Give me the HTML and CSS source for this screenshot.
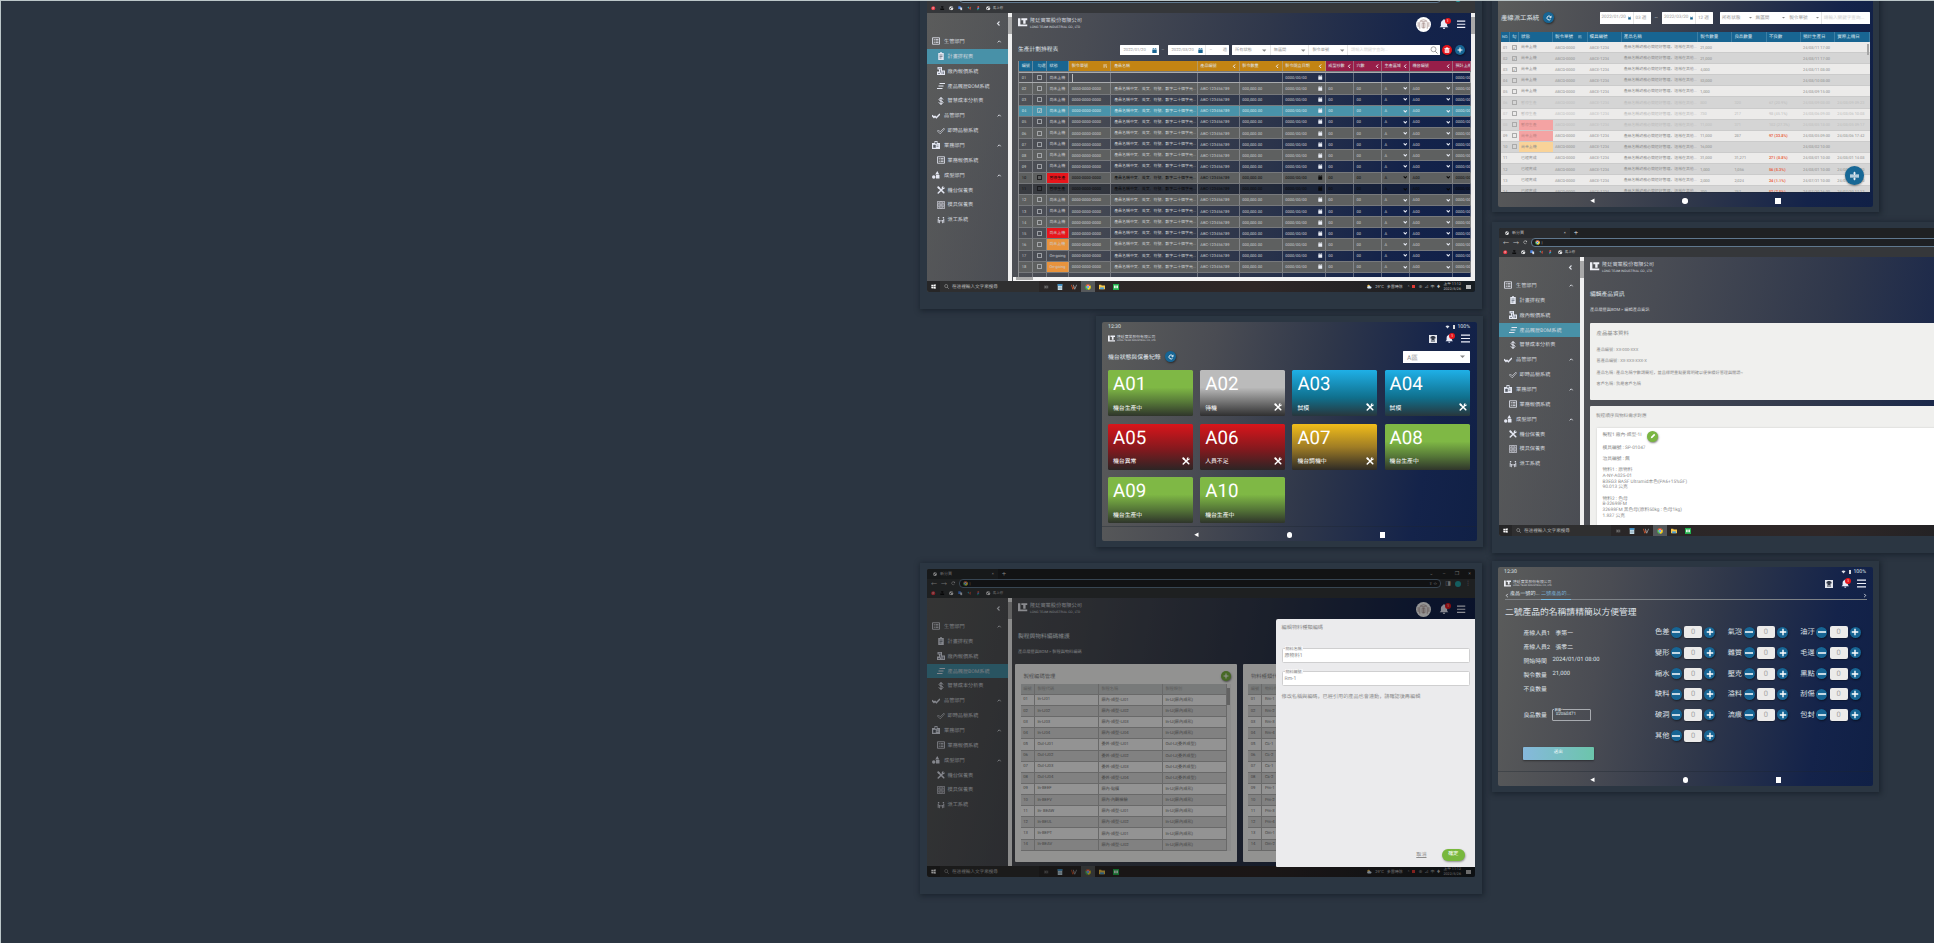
FILE: index.html
```html
<!DOCTYPE html>
<html lang="ja">
<head>
<meta charset="utf-8">
<title>隆廷實業系統介面</title>
<link rel="stylesheet" href="styles.css">
</head>
<body>
<svg class="sprite" aria-hidden="true">
  <symbol id="mark" viewBox="0 0 20 18"><path d="M0 0h5v13h15v4H0z" fill="currentColor"/><path d="M7 0h13v4h-4v7.500h-5V4H7z" fill="currentColor"/></symbol>
  <symbol id="list" viewBox="0 0 16 16"><path d="M1 1.500h14v13H1z" fill="none" stroke="currentColor" stroke-width="1.600"/><path d="M3.500 5h2M3.500 8h2M3.500 11h2M7 5h6M7 8h6M7 11h6" stroke="currentColor" stroke-width="1.500"/></symbol>
  <symbol id="clip" viewBox="0 0 16 16"><path d="M2.500 2H6a2 2 0 0 1 4 0h3.500v14h-11z" fill="currentColor"/><path d="M5 6h6M5 9h6M5 12h4" stroke="#4d5664" stroke-width="1.300"/></symbol>
  <symbol id="quote" viewBox="0 0 16 16"><path d="M1 0h9v7h6v9H0V9h4V5H1z" fill="currentColor"/><path d="M3 2.500h5M7 5v5M2 12l2 2 3-3M10 9v5M13 9v5" stroke="#4d5664" stroke-width="1.200" fill="none"/></symbol>
  <symbol id="bars" viewBox="0 0 16 16"><path d="M5 3h11M3 8h10M0 13h11" stroke="currentColor" stroke-width="2.400"/></symbol>
  <symbol id="dollar" viewBox="0 0 16 16"><path d="M12 5C11.500 3 10 2.500 8 2.500S4.200 3.400 4.200 5.200C4.200 9 12 6.800 12 10.700c0 1.800-1.700 2.800-4 2.800s-3.800-.9-4.200-2.900M8 0v16" fill="none" stroke="currentColor" stroke-width="2"/></symbol>
  <symbol id="checks" viewBox="0 0 24 16"><path d="M0 6l6 6 4-4M8 8l5 5L24 2" fill="none" stroke="currentColor" stroke-width="4.500"/></symbol>
  <symbol id="check" viewBox="0 0 20 16"><path d="M1 8l2.500-2.500L8 10 17 1l2 2L8 15z" fill="none" stroke="currentColor" stroke-width="1.500"/></symbol>
  <symbol id="case" viewBox="0 0 16 16"><path d="M0 4h5V0h6v4h5v12H0z" fill="currentColor"/><path d="M7 2h2v3H7zM3 8h4v5H3zM9 8h4M9 11h4" fill="#535861" stroke="#535861"/></symbol>
  <symbol id="mold" viewBox="0 0 16 16"><path d="M10.500 0l4 7h-8zM8 8h7v7H8z" fill="currentColor"/><circle cx="3.500" cy="12" r="3.500" fill="currentColor"/></symbol>
  <symbol id="tools" viewBox="0 0 16 16"><path d="M4.500 4.500l9 9" stroke="currentColor" stroke-width="3.200" stroke-linecap="round"/><path d="M12 4.500l-9.500 9.500" stroke="currentColor" stroke-width="3" stroke-linecap="round"/><path d="M1 1l2.500-.5L6 3.500 3.500 6 .5 3.500zM9.500 4.500C9 2 11 0 13.500.600L11.800 2.500l1.700 1.700 1.900-1.700C16 5 14 7 11.500 6.500z" fill="currentColor"/></symbol>
  <symbol id="grid" viewBox="0 0 16 16"><g fill="none" stroke="currentColor" stroke-width="1.300"><path d="M.8.8h14.400v14.400H.8zM.8 8h14.400M8 .8v14.400"/><circle cx="4.500" cy="4.500" r="1.300"/><circle cx="11.500" cy="4.500" r="1.300"/><circle cx="4.500" cy="11.500" r="1.300"/><circle cx="11.500" cy="11.500" r="1.300"/></g></symbol>
  <symbol id="crew" viewBox="0 0 20 16"><circle cx="4" cy="2.500" r="2" fill="currentColor"/><circle cx="16" cy="2.500" r="2" fill="currentColor"/><path d="M3 5v10M17 5v10M3 8l5 2h4l5-2M6 10v6M14 10v6" fill="none" stroke="currentColor" stroke-width="2"/></symbol>
  <symbol id="up" viewBox="0 0 10 10"><path d="M1.500 7L5 3.500 8.500 7" fill="none" stroke="currentColor" stroke-width="2.200"/></symbol>
  <symbol id="down" viewBox="0 0 10 10"><path d="M1.500 3L5 6.500 8.500 3" fill="none" stroke="currentColor" stroke-width="2.500"/></symbol>
  <symbol id="left" viewBox="0 0 10 10"><path d="M7 1L3 5l4 4" fill="none" stroke="currentColor" stroke-width="2.200"/></symbol>
  <symbol id="right" viewBox="0 0 10 10"><path d="M3 1l4 4-4 4" fill="none" stroke="currentColor" stroke-width="2.200"/></symbol>
  <symbol id="bell" viewBox="0 0 16 16"><path d="M1 13l2-2V7c0-3 2-4.500 3.500-5a1.500 1.500 0 0 1 3 0C11 2.500 13 4 13 7v4l2 2zM6 14h4a2 2 0 0 1-4 0z" fill="currentColor"/></symbol>
  <symbol id="burger" viewBox="0 0 16 16"><path d="M0 2h16M0 8h16M0 14h16" stroke="currentColor" stroke-width="2.200"/></symbol>
  <symbol id="cal" viewBox="0 0 16 16"><path d="M1 2h2V0h2v2h6V0h2v2h2v3H1zM1 6h14v10H1z" fill="currentColor"/></symbol>
  <symbol id="search" viewBox="0 0 16 16"><circle cx="7" cy="6.500" r="5" fill="none" stroke="currentColor" stroke-width="1.500"/><path d="M10.500 10.500L15 15" stroke="currentColor" stroke-width="2"/></symbol>
  <symbol id="caret" viewBox="0 0 10 10"><path d="M0 3h10L5 8z" fill="currentColor"/></symbol>
  <symbol id="plus" viewBox="0 0 16 16"><path d="M8 1.500v13M1.500 8h13" stroke="currentColor" stroke-width="2.800"/></symbol>
  <symbol id="minus" viewBox="0 0 16 16"><path d="M0 8h16" stroke="currentColor" stroke-width="3"/></symbol>
  <symbol id="trash" viewBox="0 0 16 16"><path d="M1 3h4V1h6v2h4v2H1zM2 6h12v9H2z" fill="currentColor"/><path d="M5 8v5M8 8v5M11 8v5" stroke="#e3131b"/></symbol>
  <symbol id="reload" viewBox="0 0 16 16"><path d="M12.500 10.500A5.300 5.300 0 1 1 12 4.500" fill="none" stroke="currentColor" stroke-width="2.400"/><path d="M14.500 1v6h-6z" fill="currentColor"/></symbol>
  <symbol id="pencil" viewBox="0 0 16 16"><path d="M2 14l1-4 8-8 3 3-8 8z" fill="currentColor"/></symbol>
  <symbol id="globe" viewBox="0 0 16 16"><circle cx="8" cy="8" r="7.500" fill="#eee"/><path d="M2 6l4 1 2 3-1 3-4-3zM9 2l5 4-3 2-3-3z" fill="#43474c"/></symbol>
  <symbol id="pin" viewBox="0 0 16 16"><circle cx="8" cy="8" r="7.500" fill="#e4313c"/><path d="M6.500 12l1.500-6M5.500 8a2.700 2.700 0 1 1 3.500 1.500" stroke="#fff" stroke-width="1.500" fill="none"/></symbol>
  <symbol id="tray" viewBox="0 0 16 16"><path d="M4 1h8v4h-3v3h-2V5H4zM1 9h14v5H1z" fill="#0c0d0e"/></symbol>
  <symbol id="trans" viewBox="0 0 16 16"><path d="M1 1h9v10H1z" fill="#4d86e8"/><path d="M7 5h8v10H9z" fill="#d5dbe4"/></symbol>
  <symbol id="duo" viewBox="0 0 16 16"><path d="M1 5l6-3v8z" fill="#2d9bb0"/><path d="M8 5l7-3-2 12-6-4z" fill="#a74a3a"/></symbol>
  <symbol id="fig" viewBox="0 0 16 16"><path d="M5 1h3v5H5z" fill="#f24e1e"/><path d="M8 1h3v5H8z" fill="#ff7262"/><path d="M5 6h3v5H5z" fill="#a259ff"/><path d="M8 6h3v5H8z" fill="#1abcfe"/><path d="M5 11h3v4H5z" fill="#0acf83"/></symbol>
  <symbol id="win" viewBox="0 0 16 16"><path d="M1 2.500L7 2v5.500H1zM8 2l7-1v6.500H8zM1 8.500h6V14l-6-.5zM8 8.500h7V15l-7-1z" fill="#fff"/></symbol>
  <symbol id="task" viewBox="0 0 16 16"><path d="M1 2v12M4 4h6v8H4zM13 2v12" stroke="#aaa" fill="none" stroke-width="1.600"/></symbol>
  <symbol id="calc" viewBox="0 0 16 16"><path d="M2 0h12v16H2z" fill="#cfe4ee"/><path d="M2 0h12v5H2z" fill="#3b8cc2"/><path d="M5 7v7M8 7v7M11 7v7" stroke="#4b6f82"/></symbol>
  <symbol id="wlogo" viewBox="0 0 16 16"><path d="M1 2l4 12 3-8" stroke="#e25a2c" stroke-width="2" fill="none"/><path d="M6 2l4 12 5-12" stroke="#9fa8ac" stroke-width="2" fill="none"/></symbol>
  <symbol id="chrome" viewBox="0 0 16 16"><circle cx="8" cy="8" r="7.500" fill="#4caf50"/><path d="M8 8L1.500 4.300A7.500 7.500 0 0 1 14.500 4.300z" fill="#ea4335"/><path d="M8 8l6.500-3.700A7.500 7.500 0 0 1 8 15.500z" fill="#fbc116"/><circle cx="8" cy="8" r="3.700" fill="#fff"/><circle cx="8" cy="8" r="2.700" fill="#4285f4"/></symbol>
  <symbol id="folder" viewBox="0 0 16 16"><path d="M0 2h6l1 2h9v10H0z" fill="#f5c64c"/><path d="M3 9h10v5H3z" fill="#4a9fd8"/></symbol>
  <symbol id="line" viewBox="0 0 16 16"><path d="M0 0h16v16H0z" fill="#23b14d"/><path d="M3 4h4v7H3zM9 4h4v7H9z" fill="#fff"/></symbol>
  <symbol id="cloud" viewBox="0 0 16 16"><circle cx="5" cy="6" r="4" fill="#f1c255"/><path d="M3 14a3 3 0 0 1 1-6 4 4 0 0 1 7 0 3 3 0 0 1 1 6z" fill="#d4e6f5"/></symbol>
  <symbol id="shirt" viewBox="0 0 16 16"><path d="M0 0h16v16H0z" fill="#e6e8ef"/><path d="M3 4l3-2h4l3 2v3h-2v7H9v-4H7v4H5V7H3z" fill="#333a49"/></symbol>
  <symbol id="face" viewBox="0 0 16 16"><circle cx="8" cy="8" r="8" fill="#fff"/><g fill="none" stroke="#a8918e" stroke-width=".8"><path d="M4 12.500V6q0-3 4-3t4 3v6.500M6.500 6.500h3v5h-3zM2.300 5.500v5M13.700 5.500v5"/><path d="M5.500 5h5M8 6v6"/></g></symbol>
  <symbol id="back" viewBox="0 0 10 10"><path d="M9 .5v9L.5 5z" fill="#fff"/></symbol>
  <symbol id="wifi" viewBox="0 0 16 16"><path d="M0 5q8-6 16 0l-8 9z" fill="currentColor"/></symbol>
  <symbol id="split" viewBox="0 0 16 16"><path d="M0 6.500h16M0 9.500h16M8 2v4M8 11v3" stroke="currentColor" stroke-width="1.900"/><path d="M5 3.500L8 0l3 3.500zM5 12.500L8 16l3-3.500z" fill="currentColor"/></symbol>
  <symbol id="sort" viewBox="0 0 16 16"><path d="M1 3h13M1 7h9M1 11h6M12 6v8" stroke="currentColor" stroke-width="2"/></symbol>
</svg>

<main class="canvas">
  <section class="frame frame-schedule"><div class="desktop" data-active="計畫排程表">
    <div class="page">
      <div class="main" data-slot="schedule"></div>
      <div class="vbar"><i></i></div>
    </div>
  </div></section>

  <section class="frame frame-dispatch"><div class="tablet" data-slot="dispatch"></div></section>

  <section class="frame frame-machines"><div class="tablet" data-slot="machines"></div></section>

  <section class="frame frame-product"><div class="desktop" data-active="產品履歷BOM系統">
    <div class="page">
      <div class="main product">
        <div class="brand"><svg class="mark"><use href="#mark"/></svg><span>隆廷實業股份有限公司<small>LONG TEAM INDUSTRIAL CO., LTD</small></span></div>
        <h2>編輯產品資訊</h2>
        <p class="crumb">產品履歷與BOM &gt; 編輯產品資訊</p>
        <div class="panel basics">
          <h3>產品基本資料</h3>
          <p>產品編號 : XX-000-XXX</p>
          <p>舊產品編號 : XX-XXX-XXX-X</p>
          <p>產品名稱 : 產品名稱字數請簡短，並且標題重點要寫明確以便後續好管理與閱讀~</p>
          <p>客戶名稱 : 我是客戶名稱</p>
        </div>
        <div class="panel process">
          <h3>製程順序與物料需求對應</h3>
          <div class="sheet">
            <h4>製程1 廠內-成型-1I <span class="round green"><svg><use href="#pencil"/></svg></span></h4>
            <p class="wide">模具編號 : SP-01047</p>
            <p class="wide">治具編號 : 無</p>
            <p>物料1 : 原物料<br>A-NY-A025-01<br>B3EG3 BASF Ultramid本色(PA6+15%GF)<br>90.013 公克</p>
            <p>物料2 : 色母<br>B-32698FM<br>32698FM 黑色母(原料50kg : 色母1kg)<br>1.837 公克</p>
          </div>
        </div>
      </div>
    </div>
  </div></section>

  <section class="frame frame-codes"><div class="desktop" data-active="產品履歷BOM系統">
    <div class="page">
      <div class="main codes">
        <div class="topline"><div class="brand"><svg class="mark"><use href="#mark"/></svg><span>隆廷實業股份有限公司<small>LONG TEAM INDUSTRIAL CO., LTD</small></span></div>
          <div class="tools"><svg class="avatar"><use href="#face"/></svg><span class="bell"><svg><use href="#bell"/></svg><em>1</em></span><svg class="burger"><use href="#burger"/></svg></div></div>
        <h2>製程與物料編碼維護</h2>
        <p class="crumb">產品履歷與BOM &gt; 製程與物料編碼</p>
        <div class="code-panels" data-slot="codes"></div>
      </div>
    </div>
    <div class="shade"></div>
    <aside class="drawer">
      <h3>編輯物料種類編碼</h3>
      <label class="field"><span>物料名稱</span>原物料1</label>
      <label class="field"><span>物料編號</span>Rm-1</label>
      <p>修改名稱與編碼，已經引用的產品也會連動，請確認後再編輯</p>
      <div class="actions"><span class="cancel">取消</span><span class="ok">確定</span></div>
    </aside>
  </div></section>

  <section class="frame frame-defects"><div class="tablet" data-slot="defects"></div></section>
</main>
<div class="edge"></div>
<script src="app.js"></script>
</body>
</html>
```
FILE: app.js
```js
const icon = (id, cls = '') => `<svg class="${cls}"><use href="#${id}"/></svg>`;
const range = n => Array.from({ length: n }, (_, i) => i);
const pad = n => String(n).padStart(2, '0');
const slot = name => document.querySelector(`[data-slot="${name}"]`);
const brand = `<div class="brand">${icon('mark', 'mark')}<span>隆廷實業股份有限公司<small>LONG TEAM INDUSTRIAL CO., LTD</small></span></div>`;
const bell = `<span class="bell">${icon('bell')}<em>1</em></span>${icon('burger', 'burger')}`;

const chrome = `<div class="chrome">
  <div class="tabs"><span class="tab">${icon('globe')}<span>新分頁</span><b>×</b></span><span class="add">+</span><span class="sys"><i>⌄</i><i>–</i><i>❐</i><i>×</i></span></div>
  <div class="nav"><span>←</span><span>→</span>${icon('reload')}<span class="url">${icon('chrome')}<span>|</span><span class="url-end">⇪ ☆</span></span><span class="side">◨</span><i class="me"></i><span>⋮</span></div>
  <div class="marks">${['pin', 'tray', 'globe', 'trans', 'duo', 'fig', 'globe'].map(i => icon(i)).join('')}<span>馬上修</span></div></div>`;

const taskbar = `<div class="taskbar"><span class="start">${icon('win')}</span><span class="find">${icon('search')}在這裡輸入文字來搜尋</span>
  ${['task', 'calc', 'wlogo', 'chrome', 'folder', 'line'].map(i => `<span class="app on-${i}">${icon(i)}</span>`).join('')}
  <span class="status">${icon('cloud')}<span>29°C</span><span>多雲時陰</span><span class="glyphs">^<i></i>⊕ ⊿ 中 ♦</span><span class="clock">上午 11:12<br>2022/5/26</span><span class="note"></span></span></div>`;

const menu = [
  ['list', '生管部門', 1], ['clip', '計畫排程表'], ['quote', '廠內報價系統'], ['bars', '產品履歷BOM系統'], ['dollar', '智慧成本分析表'],
  ['checks', '品管部門', 1], ['check', '即時品檢系統'], ['case', '業務部門', 1], ['list', '業務報價系統'],
  ['mold', '成型部門', 1], ['tools', '機台保養表'], ['grid', '模具保養表'], ['crew', '派工系統']];

document.querySelectorAll('.desktop').forEach(d => {
  const active = d.dataset.active;
  const rows = menu.map(([i, t, g]) => `<li class="${g ? 'group' : ''} ${t === active ? 'active' : ''}"><span class="ic">${icon(i)}</span>${t}${g ? icon('up', 'chev') : ''}</li>`).join('');
  d.querySelector('.page').insertAdjacentHTML('afterbegin', `<nav class="sidebar"><div class="fold">${icon('left')}</div><ul>${rows}</ul></nav><div class="vbar"><i></i></div>`);
  d.insertAdjacentHTML('afterbegin', chrome);
  d.querySelector('.page').insertAdjacentHTML('afterend', taskbar);
});

/* production schedule */
const heads = ['編號', '勾選', '狀態', '製令單號', '產品名稱', '產品編號', '製令數量', '製令開立日期', '成型秒數', '穴數', '生產區域', '機台編號', '預計上機'];
const name = '產品名稱中文、英文、符號、數字二十個字元...';
const cal = icon('cal'), dn = icon('down');
const statuses = { 10: '暫停生產', 11: '暫停生產', 17: 'On-going', 18: 'On-going' };
const scheduleRow = n => {
  const st = statuses[n] || '尚未上機';
  const rest = n === 1
    ? ['<i class="cursor"></i>', '', '', '', `0000/00/00${cal}`, '', '', '', '', '0000/00/00']
    : ['0000-0000-0000', name, 'ABC-123456789', '000,000.00', `0000/00/00${cal}`, '00', '00', `A${dn}`, `A00${dn}`, '0000/00/00'];
  return `<div class="tr r${n}">${[pad(n), `<i class="box">${n === 4 ? '✓' : ''}</i>`, st, ...rest].map(c => `<span>${c}</span>`).join('')}</div>`;
};
slot('schedule').innerHTML = `<div class="topline">${brand}<div class="tools">${icon('face', 'avatar')}${bell}</div></div>
<div class="filters"><h2>生產計劃排程表</h2>
  <span class="input d1">2022/01/20${cal}</span><span class="dash">–</span><span class="input d2"><span>2022/03/20${cal}</span><span>–</span><span>週</span></span>
  <span class="input sel"><span>所有狀態${icon('caret')}</span><span>無區間${icon('caret')}</span><span>製令單號${icon('caret')}</span><span class="q">請輸入關鍵字查詢...${icon('search')}</span></span>
  <span class="round red">${icon('trash')}</span><span class="round blue">${icon('plus')}</span></div>
<div class="grid-wrap"><div class="table schedule"><div class="tr th">${heads.map((h, i) => `<span>${h}${i === 3 ? icon('sort') : i > 4 && i < 12 ? icon('left') : ''}</span>`).join('')}</div>${range(18).map(i => scheduleRow(i + 1)).join('')}<div class="tr tail">${heads.map(() => '<span></span>').join('')}</div></div></div>
<div class="hbar"><i></i></div>`;

/* dispatch tablet */
const dHeads = ['NO.', '勾', '狀態', '製令單號', '模具編號', '產品名稱', '製令數量', '良品數量', '不良數', '預計生產日', '實際上機日'];
const dRows = [
  ['尚未上機', '21,000', '', '', '24/08/11 17:00', ''], ['尚未上機', '21,000', '', '', '24/08/11 17:00', ''],
  ['尚未上機', '4,000', '', '', '24/08/11 08:00', ''], ['尚未上機', '53,000', '', '', '24/08/10 08:00', ''],
  ['尚未上機', '1,000', '', '', '24/08/09 15:00', ''], ['暫停生產', '800', '320', '67 (20.9%)', '24/08/09 08:00', '24/08/09 09:23'],
  ['暫停生產', '730', '217', '98 (45.1%)', '24/08/06 09:00', '24/08/06 10:08'], ['暫停生產', '11,000', '371', '102 (27.3%)', '24/08/05 18:00', '24/08/05 09:17'],
  ['尚未上機', '11,000', '287', '97 (33.8%)', '24/08/05 09:00', '24/08/06 17:42'], ['尚未上機', '16,000', '', '', '24/08/02 10:00', ''],
  ['已經完成', '31,000', '31,271', '271 (0.8%)', '24/08/01 10:00', '24/08/01 14:08'], ['已經完成', '1,000', '1,056', '56 (5.3%)', '24/08/01 10:00', '24/08/01 10:40'],
  ['已經完成', '2,000', '2,024', '24 (1.1%)', '24/07/31 10:00', '24/07/31 11:20'], ['已經完成', '700', '757', '57 (7.5%)', '24/07/30 16:00', '24/07/30 17:12']];
const navbar = `<div class="navbar">${icon('back')}<i class="home"></i><i class="recent"></i></div>`;
slot('dispatch').innerHTML = `<small class="peek">LONG TEAM INDUSTRIAL CO., LTD</small>
<div class="d-filters"><h2>產線派工系統</h2><span class="round blue">${icon('reload')}</span>
  <span class="input dd"><span>2022/01/20${cal}</span><span>03 週</span></span><span class="dash">~</span><span class="input dd"><span>2022/03/20${cal}</span><span>12 週</span></span>
  <span class="input ds"><span>所有狀態${icon('caret')}</span><span>無區間${icon('caret')}</span><span>製令單號${icon('caret')}</span><span class="q">請輸入關鍵字查詢...</span></span></div>
<div class="d-wrap"><div class="table dispatch"><div class="tr th">${dHeads.map((h, i) => `<span>${h}${i === 3 ? icon('sort') : ''}</span>`).join('')}</div>
${dRows.map(([s, q, g, b, p, a], i) => `<div class="tr r${i + 1}">${[pad(i + 1), i < 10 ? `<i class="box">${i < 3 ? '✓' : ''}</i>` : '', s, 'ABCD-0000', 'ABCE-1234', '產品名稱請務必簡短好管理，這樣在其他...', q, g, b, p, a].map(c => `<span>${c}</span>`).join('')}</div>`).join('')}</div>
<span class="thumb"></span><span class="fab">${icon('split')}</span></div>${navbar}`;

/* machine status tablet */
const status = `<div class="statusbar"><span>12:30</span><span>${icon('wifi')}<i class="bat"></i>100%</span></div>
<div class="t-top">${brand}<div class="tools">${icon('shirt', 'shirt')}${bell}</div></div>`;
const machines = [['green', '機台生產中'], ['gray', '待機', 1], ['cyan', '試模', 1], ['cyan', '試模', 1], ['crimson', '機台異常', 1], ['crimson', '人員不足', 1], ['amber', '機台調機中', 1], ['green', '機台生產中'], ['green', '機台生產中'], ['green', '機台生產中']];
slot('machines').innerHTML = `${status}<div class="m-head"><h2>機台狀態與保養紀錄</h2><span class="round blue">${icon('reload')}</span><span class="input area">A區${icon('caret')}</span></div>
<div class="cards">${machines.map(([c, t, k], i) => `<div class="card ${c}"><b>A${pad(i + 1)}</b><span>${t}${k ? icon('tools') : ''}</span></div>`).join('')}</div>${navbar}`;

/* code tables */
const codes = [['In-IJ01', '廠內-成型-IJ01'], ['In-IJ02', '廠內-成型-IJ02'], ['In-IJ03', '廠內-成型-IJ03'], ['In-IJ04', '廠內-成型-IJ04'], ['Out-IJ01', '委外-成型-IJ01'], ['Out-IJ02', '委外-成型-IJ02'], ['Out-IJ03', '委外-成型-IJ03'], ['Out-IJ04', '委外-成型-IJ04'], ['In-BEEF', '廠內-貼膜'], ['In-BEFV', '廠內-內觀檢驗'], ['In- BEAW', '廠內-成型-IJ01'], ['In-BEUL', '廠內-成型-IJ02'], ['In-BEPT', '廠內-成型-IJ01'], ['In-BEAV', '廠內-成型-IJ02']];
const mats = ['Rm-1', 'Rm-2', 'Rm-3', 'Rm-4', 'Cc-1', 'Cc-2', 'Cs-1', 'Cs-2', 'Pm-1', 'Pm-2', 'Pm-3', 'Pm-4', 'Om-1', 'Om-2'];
const codeTable = (head, rows) => `<div class="code-body"><div class="table code"><div class="tr th">${head.map(h => `<span>${h}</span>`).join('')}</div>${rows.map(r => `<div class="tr">${r.map(c => `<span>${c}</span>`).join('')}</div>`).join('')}</div><div class="vbar"><i></i></div></div>`;
slot('codes').innerHTML = `<div class="panel"><h3>製程編碼管理<span class="round green">${icon('plus')}</span></h3>${codeTable(['編號', '製程代碼', '製程名稱', '製程類別'], codes.map(([c, n], i) => [pad(i + 1), c, n, c.startsWith('Out') ? 'Out-IJ(委外成型)' : 'In-IJ(廠內成形)']))}</div>
<div class="panel"><h3>物料種類代碼</h3>${codeTable(['編號', '物料代碼', '', ''], mats.map((m, i) => [pad(i + 1), m, '', '']))}</div>`;

/* defect entry tablet */
const info = [['產線人員1', '李第一'], ['產線人員2', '張零二'], ['開始時間', '2024/01/01 08:00'], ['製令數量', '21,000'], ['不良數量', '']];
const defects = ['色差', '氣泡', '油汙', '變形', '雜質', '毛邊', '縮水', '壓克', '黑點', '缺料', '溢料', '刮傷', '破洞', '流痕', '包封', '其他'];
slot('defects').innerHTML = `${status}<div class="t-tabs">${icon('left')}<span>產品一號的...</span><span class="on">二號產品的...</span>${icon('right', 'end')}</div>
<h1>二號產品的名稱請精簡以方便管理</h1>
<div class="entry"><div class="info"><dl>${info.map(([k, v]) => `<div><dt>${k}</dt><dd>${v}</dd></div>`).join('')}</dl>
<div class="good">良品數量<span class="num"><small>數量*</small>82868471</span></div><div class="send">送出</div></div>
<div class="counters">${defects.map(d => `<div class="counter"><span>${d}</span><i class="round blue">${icon('minus')}</i><b>0</b><i class="round blue">${icon('plus')}</i></div>`).join('')}</div></div>${navbar}`;
```
FILE: styles.css
```css
* { box-sizing: border-box; }
body { margin: 0; width: 1934px; height: 943px; overflow: hidden; background: #2b3541; font-family: Roboto, "Noto Sans CJK JP", sans-serif; color: #dfe2e8; text-rendering: geometricPrecision; }
h1, h2, h3, h4, p, ul, dl, dd { margin: 0; padding: 0; font-weight: 400; list-style: none; }
i, em { font-style: normal; }
svg { display: block; flex: none; width: 5px; height: 5px; overflow: visible; }
.sprite { position: absolute; width: 0; height: 0; }
.edge { position: absolute; inset: 0; border-top: 1px solid #bcc7c9; border-left: 1px solid #bcc7c9; pointer-events: none; }

/* screens placed on the canvas */
.canvas { position: relative; width: 1934px; height: 943px; overflow: hidden; }
.frame { position: absolute; background: #2b3642; box-shadow: 1px 1px 5px 1px rgba(12, 20, 28, .5); }
.frame-schedule { left: 920px; top: -22px; width: 562px; height: 331px; padding: 6px 7px; }
.frame-dispatch { left: 1492px; top: -18px; width: 387px; height: 230px; padding: 6px; }
.frame-machines { left: 1096px; top: 316px; width: 387px; height: 231px; padding: 6px; }
.frame-product { left: 1492px; top: 222px; width: 562px; height: 331px; padding: 6px 7px; }
.frame-codes { left: 920px; top: 563px; width: 562px; height: 331px; padding: 6px 7px; }
.frame-defects { left: 1492px; top: 561px; width: 387px; height: 231px; padding: 6px; }
.desktop { position: relative; width: 548px; height: 308px; display: flex; flex-direction: column; border-radius: 2px; overflow: hidden; background: linear-gradient(100deg, #5b5b5a 0%, #494c54 28%, #2f374b 58%, #14234a 84%, #102049 100%); }
.tablet { width: 375px; height: 219px; display: flex; flex-direction: column; border-radius: 2px; overflow: hidden; background: linear-gradient(100deg, #5b5c5b 0%, #4a4c53 28%, #2f374a 56%, #14234a 84%, #102046 100%); }

/* browser chrome */
.chrome { flex: none; height: 29px; background: #35373a; font-size: 4px; color: #bbb; }
.tabs { height: 9.500px; background: #1f2123; display: flex; align-items: center; }
.tab { width: 71px; height: 100%; background: #292b2e; display: flex; align-items: center; gap: 3px; padding: 0 4px 0 6px; }
.tab svg { width: 4px; height: 4px; }
.tab b { margin-left: auto; font-weight: 400; }
.add { margin-left: 4px; font-size: 7px; }
.sys { margin-left: auto; display: flex; gap: 9px; padding-right: 4px; font-size: 5px; }
.nav { height: 10px; display: flex; align-items: center; padding: 0 4px; gap: 4px; font-size: 6px; }
.nav > svg { width: 4.500px; height: 4.500px; }
.url { flex: 1; height: 8.500px; display: flex; align-items: center; gap: 2px; padding: 0 3px; margin-left: -1px; border: 1px solid #60788e; border-radius: 4px; background: #1e2023; font-size: 4px; }
.url-end { margin-left: auto; }
.me { width: 6px; height: 6px; border-radius: 50%; background: #23a0a4; }
.marks { height: 9px; display: flex; align-items: center; gap: 4.600px; padding-left: 4px; }
.marks svg { width: 4.500px; height: 4.500px; }
.marks span { margin-left: -2px; font-size: 3.500px; }
.frame-schedule .tabs, .frame-schedule .nav span:not(.url) { visibility: hidden; }

/* task bar */
.taskbar { flex: none; height: 11px; display: flex; align-items: center; background: linear-gradient(90deg, #262627, #2f2727 60%, #171d22); font-size: 4.600px; color: #b9b9b9; }
.start { width: 13px; display: grid; place-items: center; }
.find { width: 99px; height: 100%; background: #2f2f30; display: flex; align-items: center; gap: 3px; padding-left: 4px; }
.app { width: 14px; height: 100%; display: grid; place-items: center; }
.app svg { width: 6px; height: 6px; }
.on-chrome { background: #55585b; }
.on-task svg { width: 5px; height: 4px; }
.status { margin-left: auto; display: flex; align-items: center; gap: 3px; padding-right: 4px; font-size: 4px; }
.glyphs { display: flex; gap: 3px; align-items: center; white-space: pre; word-spacing: 1px; padding-left: 2px; }
.glyphs i { width: 3px; height: 3px; background: #e03a34; }
.clock { font-size: 3.700px; line-height: 5px; text-align: right; }
.note { width: 5px; height: 4px; background: #bbb; margin-left: 2px; }

/* sidebar */
.page { flex: none; height: 268px; display: flex; overflow: hidden; }
.sidebar { width: 80.500px; flex: none; background: linear-gradient(105deg, rgba(91, 92, 92, .7), rgba(72, 75, 82, .5)); font-size: 5.150px; }
.fold { height: 21px; display: flex; align-items: center; padding-left: 69px; }
.sidebar li { height: 14.860px; display: flex; align-items: center; padding-left: 8px; position: relative; color: #d5d8df; }
.sidebar li.group { padding-left: 3px; }
.ic { width: 12px; display: grid; place-items: center; margin-right: .5px; }
.group .ic { width: 12px; margin-right: 2px; }
.ic svg { width: 8px; height: 8px; color: #e4e7f2; }
.group .chev { margin-left: auto; margin-right: 6px; width: 4.500px; }
.sidebar li.active { background: #4891a8; }
.vbar { width: 4.500px; flex: none; background: #f0f0f0; padding: 4px .3px 0; }
.vbar i { display: block; height: 17px; background: #a9a9a9; }
.main { flex: 1; min-width: 0; display: flex; flex-direction: column; padding-left: 6px; overflow: hidden; }

/* shared pieces */
.topline { display: flex; justify-content: space-between; padding-right: 5.500px; height: 22px; flex: none; }
.brand { display: flex; gap: 2.500px; padding-top: 4.500px; }
.mark { width: 9.500px; height: 9px; color: #eef0f6; }
.brand span { font-size: 5.200px; line-height: 7px; color: #d0d3da; }
.brand small { display: block; font-size: 3.300px; line-height: 5px; white-space: nowrap; }
.tools { display: flex; align-items: center; gap: 8px; }
.avatar { width: 15px; height: 15px; }
.bell { position: relative; display: block; }
.bell svg { width: 10px; height: 10px; color: #e8ebf8; }
.bell em { position: absolute; right: -2px; top: -1px; width: 6px; height: 6px; border-radius: 50%; background: #e8171c; color: #fff; font-size: 4px; line-height: 6px; text-align: center; }
.burger { width: 8.500px; height: 8.500px; color: #eef0fa; }
.round { width: 10px; height: 10px; flex: none; border-radius: 50%; display: grid; place-items: center; color: #fff; box-shadow: .5px 1px 2px rgba(0, 0, 0, .5); }
.round svg { width: 6px; height: 6px; }
.blue { background: #176594; } .red { background: #e3131b; } .green { background: #7ab642; }
.input { background: #fff; color: #999; height: 10px; display: flex; align-items: center; font-size: 4.200px; white-space: nowrap; border-radius: .5px; }
.input svg { color: #1a6693; margin-left: auto; }
.dash { text-align: center; font-size: 5px; color: #9da1a8; }
.table .tr { display: grid; }
.table .tr > span { display: flex; align-items: center; min-width: 0; overflow: hidden; white-space: nowrap; padding-left: 2.700px; }
.box { width: 5px; height: 5px; border: 1px solid rgba(200, 203, 208, .65); font-size: 4px; line-height: 3px; text-align: center; border-radius: .5px; }

/* production schedule */
.filters { height: 26px; display: flex; align-items: center; padding-top: 4px; flex: none; }
.filters h2 { width: 101.500px; font-size: 5.750px; }
.d1 { width: 39px; padding: 0 2px 0 4px; }
.filters .dash { width: 9px; }
.d2 { width: 61.500px; margin-right: 3px; }
.d2 span { padding: 0 2px 0 4px; height: 100%; display: flex; align-items: center; }
.d2 span:first-child { width: 38px; border-right: 1px solid #e5e5e5; }
.d2 span:nth-child(2) { flex: 1; }
.sel { width: 207.500px; }
.sel > span { width: 38.700px; height: 100%; display: flex; align-items: center; padding: 0 3px; border-right: 1px solid #e5e5e5; }
.sel svg { color: #888; width: 4.500px; }
.sel .q { flex: 1; border: 0; color: #d5d5d5; padding-right: 1.500px; }
.sel .q svg { width: 8px; height: 8px; }
.filters .round { margin-left: 2.700px; }
.grid-wrap { height: 215.500px; flex: none; overflow: hidden; border-left: 1px solid #8c8d90; }
.schedule { font-size: 4px; color: #c9cbce; }
.schedule .tr { width: 452px; height: 11.150px; grid-template-columns: 13.700px 14px 22.400px 42.400px 86.200px 42px 43px 43px 28.200px 28px 28px 43px 18.300px; border-bottom: 1px solid #77797c; }
.schedule .tr > span { border-right: 1px solid rgba(170, 172, 175, .5); }
.schedule .tr > span:nth-child(2) { padding-left: 4.700px; }
.schedule .tr > span:nth-child(5) { font-size: 3.950px; }
.schedule svg { margin-left: auto; margin-right: 2.500px; width: 4.600px; height: 5px; color: #e9edf6; }
.schedule .tr > span:nth-child(n+9) svg { margin-right: 1.300px; width: 4.500px; height: 4.500px; }
.schedule .th { height: 11.300px; color: #dce0e4; font-size: 4.100px; }
.schedule .th > span { background: #186590; }
.schedule .th > span:nth-child(n+4) { background: #c38413; }
.schedule .th > span:nth-child(n+9) { background: #971e49; }
.schedule .th svg { width: 4.500px; height: 4.500px; }
.schedule .tr:nth-child(odd):not(.th) { background: #5e6060; }
.schedule .r1 { border: 1px solid #a9abae; border-left: 0; }
.schedule .tr.r4:nth-child(n) { background: #4993aa; color: #d7e4e8; }
.schedule .r10, .schedule .r11, .schedule .r10 svg, .schedule .r11 svg { color: #0b0b0c; }
.r10 .box, .r11 .box { border-color: rgba(20, 20, 22, .8); }
.schedule .r11 { background: rgba(20, 23, 27, .35); }
.schedule .tr.tail { background: none; }
.r10 > span:nth-child(3), .r15 > span:nth-child(3) { background: #e8151b; }
.r16 > span:nth-child(3), .r18 > span:nth-child(3) { background: #e8933c; }
.cursor { width: 1px; height: 8px; background: #bbb; }
.hbar { height: 4.500px; flex: none; background: #f4f4f4; margin-left: -5px; padding: .7px 3px; }
.hbar i { display: block; width: 17px; height: 3px; background: #aaa; }

/* dispatch tablet */
.frame-dispatch .tablet { padding: 0 3.500px 0 3px; }
.peek { height: 18px; padding-top: 10px; font-size: 3.300px; line-height: 5px; color: #a0a3a8; }
.d-filters { display: flex; align-items: center; height: 25.500px; padding-bottom: 2px; }
.d-filters h2 { font-size: 6.350px; width: 42px; }
.d-filters .round { width: 11px; height: 11px; margin-right: 45.500px; }
.d-filters .input { height: 11.500px; font-size: 4.600px; }
.dd { width: 51px; } .dd span { height: 100%; display: flex; align-items: center; padding-left: 2px; }
.dd span:first-child { width: 34px; padding-right: 2px; border-right: 1px solid #e5e5e5; }
.dd svg { width: 3px; height: 4px; }
.d-filters .dash { width: 11.500px; }
.ds { flex: 1; margin-left: 7px; }
.ds span { width: 33.600px; display: flex; align-items: center; padding: 0 2px; }
.ds svg { width: 3px; color: #888; }
.ds .q { flex: 1; color: #d0d0d0; border-left: 1px solid #e5e5e5; height: 100%; }
.d-wrap { position: relative; height: 160.500px; overflow: hidden; background: #ecebea; }
.dispatch { font-size: 4px; color: #8f8f8f; }
.dispatch .tr { height: 11.100px; grid-template-columns: 9px 9px 34px 34.500px 34.200px 76.500px 34.200px 34.500px 34.200px 34.300px 34.500px; border-bottom: 1px solid #cbcbcb; background: #ecebea; }
.dispatch .tr > span { padding-left: 2px; font-size: 3.900px; }
.dispatch .tr:nth-child(odd) { background: #d5d5d5; }
.dispatch .tr.th { height: 10.500px; background: #186592; color: #d5e1ea; border: 0; }
.dispatch .th > span { font-size: 4.500px; border-right: 1px solid #3d7ea4; }
.dispatch .th > span:first-child { font-size: 3.800px; padding-left: 1px; }
.dispatch .th svg { width: 4px; height: 4px; margin-left: 5px; }
.dispatch .box { border-color: #aaa; }
.dispatch .r6, .dispatch .r7, .dispatch .r8 { color: #bdbdbd; }
.dispatch .r9 > span:nth-child(9), .dispatch .r11 > span:nth-child(9), .dispatch .r12 > span:nth-child(9), .dispatch .r13 > span:nth-child(9), .dispatch .r14 > span:nth-child(9) { color: #e8623f; font-weight: 700; }
.dispatch .tr.r8 > span:nth-child(3), .dispatch .tr.r9 > span:nth-child(3) { background: #f4a3a3; color: #c28383; }
.dispatch .tr.r10 > span:nth-child(3) { background: #f9d398; }
.thumb { position: absolute; right: .3px; top: 12px; width: 2.500px; height: 11.500px; background: #a5a5a5; }
.fab { position: absolute; right: 6px; bottom: 7px; width: 19px; height: 19px; border-radius: 50%; background: #176896; display: grid; place-items: center; color: #e8eef4; box-shadow: 0 1px 2px rgba(0, 0, 0, .4); }
.fab svg { width: 9px; height: 10px; }

/* tablets */
.navbar { margin-top: auto; flex: none; height: 15px; padding-top: 2px; display: flex; align-items: center; justify-content: center; gap: 87.500px; border-top: 1px solid rgba(30, 36, 46, .35); }
.navbar svg { width: 5px; height: 5.500px; }
.home, .recent { width: 5.500px; height: 5.500px; background: #fff; } .home { border-radius: 50%; }
.statusbar { height: 9.500px; flex: none; display: flex; justify-content: space-between; padding: 1px 7px 0 6px; font-size: 5.200px; line-height: 8px; }
.statusbar span:last-child { display: flex; align-items: center; gap: 2.500px; }
.statusbar svg { width: 5px; height: 4px; }
.bat { width: 2px; height: 4px; background: #ddd; }
.t-top { height: 14px; flex: none; display: flex; justify-content: space-between; padding: 0 7px 0 6px; align-items: center; }
.t-top .brand { padding: 0; gap: 2px; }
.t-top .mark { width: 7px; height: 7.500px; }
.t-top .brand span { font-size: 3.850px; line-height: 4.500px; white-space: nowrap; }
.t-top .brand small { font-size: 2.550px; line-height: 3.500px; }
.t-top .shirt { width: 8px; height: 8px; }
.t-top .bell svg { width: 8.500px; height: 9px; }
.t-top .burger { width: 9px; height: 9px; }
.m-head { height: 23.500px; flex: none; display: flex; align-items: center; padding: 0 7px 1px 6px; }
.m-head h2 { font-size: 5.850px; width: 57px; white-space: nowrap; }
.m-head .round { width: 11px; height: 11px; }
.area { margin-left: auto; width: 67px; height: 11.500px; padding: 0 5px 0 4px; font-size: 6.600px; }
.area svg { color: #888; }
.cards { display: grid; grid-template-columns: repeat(4, 85px); column-gap: 7.200px; row-gap: 7.500px; padding: 1px 0 0 6px; }
.card { height: 46px; border-radius: 1.500px; padding: 4px 3px 0 5px; color: #fff; }
.card b { display: block; font: 400 18.700px/21px Roboto, sans-serif; }
.card span { display: flex; align-items: center; justify-content: space-between; height: 14px; padding-top: 10px; font-size: 5.850px; }
.card span svg { width: 8px; height: 8px; }
.card.green { background: linear-gradient(#7fb845 38%, #567838 70%, #2f352b); }
.card.gray { background: linear-gradient(#bbb 38%, #777 68%, #2f2f30); }
.card.cyan { background: linear-gradient(#1fb0e7, #10708d 60%, #28363c); }
.card.crimson { background: linear-gradient(#d9151b, #83191e 55%, #2c2525); }
.card.amber { background: linear-gradient(#f1bd1a, #a07d25 50%, #2e2b26); }

/* product editor */
.main h2 { font-size: 5.750px; line-height: 8px; }
.codes > h2 { margin-top: 12.500px; }
.product > h2 { margin-top: 17px; }
.crumb { font-size: 4.200px; line-height: 6px; margin-top: 9px; color: #d2d4d8; }
.panel { background: #f0f0ee; color: #8c8c8c; border-radius: 1px; }
.basics { height: 77px; margin-top: 9px; padding: 7px 6.500px; flex: none; font-size: 4.150px; }
.basics h3 { font-size: 5.400px; line-height: 8px; margin-bottom: 7.500px; }
.basics p { line-height: 11.450px; }
.product .brand { height: 16.500px; flex: none; }
.process { flex: none; height: 130px; margin-top: 6px; padding: 7px 0 0 7px; }
.process h3 { font-size: 4.600px; line-height: 8px; margin-left: -1px; }
.sheet { margin-top: 7px; height: 110px; background: #fff; padding: 3px 5.500px; font-size: 4.750px; line-height: 5.750px; box-shadow: 0 0 2px rgba(0, 0, 0, .15); }
.sheet h4 { font-size: 4.750px; height: 11px; display: flex; align-items: center; gap: 6px; margin-bottom: 4px; }
.sheet p { margin-bottom: 5.500px; }
.sheet .round { width: 11px; height: 11px; }

/* code maintenance */
.codes .topline { padding-right: 9.500px; }
.code-panels { display: flex; gap: 6px; margin: 8px 0 0 -3px; }
.code-panels .panel { flex: none; width: 221.500px; height: 198px; padding: 6px 6px 0 5.500px; background: #fbfbfa; }
.code-panels h3 { height: 12px; margin-bottom: 2px; padding: 0 0 0 3px; display: flex; align-items: center; justify-content: space-between; font-size: 5.300px; }
.code-body { display: flex; height: 167.500px; }
.code-body .vbar { width: 4px; }
.code { font-size: 4.200px; color: #777; }
.code .tr { height: 11.150px; grid-template-columns: 14.200px 64px 64px 64px; border-bottom: 1px solid #b5b5b5; background: #fdfdfd; }
.code .tr > span { border-right: 1px solid #b5b5b5; }
.code .tr:nth-child(odd) { background: #dedede; }
.code .tr.th { height: 11.300px; background: #cfd3d2; color: #a0a0a0; }
.shade { position: absolute; inset: 0; background: rgba(0, 0, 0, .42); }
.drawer { position: absolute; left: 349px; top: 50px; width: 199px; height: 247.500px; background: #ebebed; color: #8c8c8c; border-radius: 2px 0 0 1px; padding: 5px 5px 6px 5.500px; display: flex; flex-direction: column; }
.drawer h3 { font-size: 5.200px; line-height: 8px; margin-bottom: 15.500px; }
.field { position: relative; height: 15px; margin-bottom: 8px; border: 1px solid #cfcfd0; border-radius: 1.500px; background: #fff; padding-left: 2px; font-size: 5.100px; line-height: 14px; }
.field span { position: absolute; left: 2px; top: -3px; padding: 0 1px; font-size: 4px; line-height: 5px; background: #f5f5f6; }
.drawer p { font-size: 5.150px; line-height: 8px; white-space: nowrap; margin-top: -1px; }
.actions { margin-top: auto; display: flex; justify-content: flex-end; align-items: center; gap: 15px; padding-right: 5px; font-size: 5.100px; }
.cancel { text-decoration: underline; }
.ok { width: 23.500px; height: 12px; border-radius: 6px; background: #78b83d; color: #fff; line-height: 11.500px; text-align: center; box-shadow: .5px 1px 2px rgba(0, 0, 0, .4); }

/* defect entry */
.t-tabs { margin: 0 6.500px; height: 9px; display: flex; align-items: flex-end; gap: 1.500px; border-bottom: 1px solid #7e8388; font-size: 5.100px; line-height: 7.500px; flex: none; }
.t-tabs svg { width: 4px; height: 5px; margin-bottom: .5px; }
.t-tabs .on { color: #79aed3; border-bottom: 1px solid #77bce5; margin-bottom: -1px; }
.t-tabs .end { margin-left: auto; }
.frame-defects h1 { font-size: 8.780px; line-height: 12px; padding: 0 7px; margin-top: 7px; }
.entry { display: flex; padding-left: 25.500px; }
.info { width: 132px; padding-top: 6.500px; font-size: 5.850px; }
.info dl div { display: flex; height: 14px; align-items: center; white-space: nowrap; }
.info dt { min-width: 29px; }
.info dl div:nth-child(-n+2) dt { margin-right: 3px; }
.good { display: flex; align-items: center; gap: 5px; margin-top: 14px; }
.num { position: relative; width: 39px; height: 11.500px; border: 1px solid #a8abb0; border-radius: 1px; font-size: 4.500px; line-height: 10px; padding-left: 3px; }
.num small { position: absolute; left: 1.500px; top: -2px; font-size: 3.500px; line-height: 4px; background: #484b52; }
.send { margin: 26px 0 0 -.5px; width: 70.500px; height: 13px; border-radius: 1px; background: linear-gradient(90deg, #86b8dc, #6cc5ab); color: #fff; font-size: 4.400px; line-height: 12.500px; text-align: center; box-shadow: 0 1px 2px rgba(0, 0, 0, .4); }
.counters { display: grid; grid-template-columns: repeat(3, 72.700px); grid-auto-rows: 20.650px; padding-top: 3.500px; }
.counter { display: flex; align-items: center; font-size: 7.200px; }
.counter span { width: 16px; white-space: nowrap; }
.counter b { width: 18px; height: 12px; margin: 0 2.200px; border-radius: 2px; background: #ecebea; color: #a5a5a5; font: 400 7.500px/12px Roboto, sans-serif; text-align: center; box-shadow: 0 1px 1px rgba(0, 0, 0, .3); }
.counter .round { width: 11px; height: 11px; }
.counter .round svg { width: 8px; height: 8px; }
```
